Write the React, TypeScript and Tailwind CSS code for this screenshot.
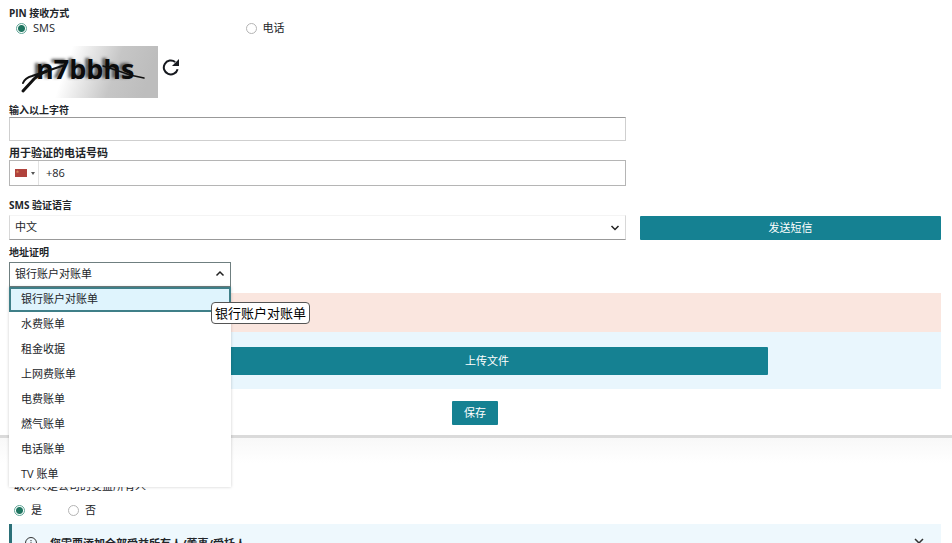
import { useState } from 'react';
import type { ReactNode } from 'react';

const PROOF_TYPES = [
  '银行账户对账单',
  '水费账单',
  '租金收据',
  '上网费账单',
  '电费账单',
  '燃气账单',
  '电话账单',
  'TV 账单',
];

type FieldLabelProps = {
  htmlFor: string;
  children: ReactNode;
};

function FieldLabel({ htmlFor, children }: FieldLabelProps) {
  return (
    <label
      htmlFor={htmlFor}
      className="block w-fit text-[10px] leading-[14px] font-bold"
    >
      {children}
    </label>
  );
}

type RadioProps = {
  name: string;
  label: string;
  checked: boolean;
  onChange: () => void;
};

function Radio({ name, label, checked, onChange }: RadioProps) {
  return (
    <label className="flex items-center gap-[6px] text-[11px] leading-4">
      <input
        type="radio"
        name={name}
        checked={checked}
        onChange={onChange}
        className="size-[11px] appearance-none rounded-full border border-[#b4b4b4] bg-white checked:border-[#5fa596] checked:bg-[radial-gradient(circle,#1f7560_0_3px,#fff_4px)]"
      />
      {label}
    </label>
  );
}

function Captcha() {
  return (
    <div className="flex items-start gap-1">
      <svg
        width="149"
        height="52"
        viewBox="0 0 149 52"
        role="img"
        aria-label="captcha"
      >
        <defs>
          <linearGradient id="captcha-bg" x1="0" y1="0" x2="1" y2="0.12">
            <stop offset="0.42" stopColor="#fff" />
            <stop offset="0.76" stopColor="#c6c6c6" />
            <stop offset="1" stopColor="#bdbdbd" />
          </linearGradient>
        </defs>
        <rect width="149" height="52" fill="url(#captcha-bg)" />
        <text
          x="27"
          y="33"
          fill="#0c0c0c"
          fontFamily='"Open Sans", "Noto Sans", sans-serif'
          fontSize="27"
          fontWeight="700"
          className="[text-shadow:-3px_-1px_3px_#555]"
        >
          n7bbhs
        </text>
        <g fill="none" stroke="#111" strokeLinecap="round">
          <path d="M14 37Q16 32 23 30L56 19" strokeWidth="2" />
          <path d="M14 45L25 33Q30 28 38 25" strokeWidth="3" />
          <path d="M94 20Q110 25 121 29L135 32" strokeWidth="1.5" />
        </g>
      </svg>
      <button type="button" aria-label="刷新" className="mt-3">
        <svg width="18" height="18" viewBox="0 0 18 18" fill="none" stroke="#16191f">
          <path d="M15.6 11.2A7 7 0 1 1 13.2 4" strokeWidth="2" />
          <path d="M17 1V8H10Z" fill="#16191f" stroke="none" />
        </svg>
      </button>
    </div>
  );
}

function Chevron({ up = false }: { up?: boolean }) {
  return (
    <svg
      width="10"
      height="10"
      viewBox="0 0 10 10"
      fill="none"
      stroke="#222"
      strokeWidth="1.5"
      className="pointer-events-none absolute top-2 right-[6px]"
    >
      <path d={up ? 'M1.5 5.5L5 2L8.5 5.5' : 'M1.5 3L5 6.5L8.5 3'} />
    </svg>
  );
}

type ProofSelectProps = {
  value: string;
  onChange: (value: string) => void;
};

function ProofSelect({ value, onChange }: ProofSelectProps) {
  return (
    <div className="relative w-[222px]">
      <select
        id="proof"
        value={value}
        onChange={(e) => onChange(e.target.value)}
        className="block h-[25px] w-full appearance-none border border-[#6f7f80] bg-white px-[5px] text-[11px]"
      >
        {PROOF_TYPES.map((type) => (
          <option key={type}>{type}</option>
        ))}
      </select>
      <Chevron up />
      <ul className="absolute top-full left-0 z-10 w-full bg-white text-[11px] shadow-[0_0_3px_rgba(0,0,0,0.2)]">
        {PROOF_TYPES.map((type) => (
          <li key={type}>
            <button
              type="button"
              onClick={() => onChange(type)}
              className={
                type === value
                  ? 'block h-[25px] w-full border-2 border-[#3f7f88] bg-[#dff4fd] px-[10px] text-left'
                  : 'block h-[25px] w-full px-3 text-left'
              }
            >
              {type}
            </button>
          </li>
        ))}
      </ul>
      <div
        role="tooltip"
        className="absolute top-10 left-[202px] z-20 rounded border border-[#555] bg-white px-[3px] text-[13px] leading-5 whitespace-nowrap text-black"
      >
        {value}
      </div>
    </div>
  );
}

function App() {
  const [pinMethod, setPinMethod] = useState('sms');
  const [proof, setProof] = useState(PROOF_TYPES[0]);
  const [isOwner, setIsOwner] = useState(true);

  return (
    <main className="h-screen overflow-hidden bg-white font-['Open_Sans','Noto_Sans_CJK_SC',sans-serif] text-[#222529]">
      <form className="border-b-3 border-[#dadada] pt-[6px] pr-[11px] pb-[10px] pl-[9px]">
        <fieldset>
          <legend className="text-[10px] leading-[14px] font-bold">PIN 接收方式</legend>
          <div className="grid grid-cols-4 pr-[7px] pl-[7px]">
            <Radio
              name="pin"
              label="SMS"
              checked={pinMethod === 'sms'}
              onChange={() => setPinMethod('sms')}
            />
            <Radio
              name="pin"
              label="电话"
              checked={pinMethod === 'phone'}
              onChange={() => setPinMethod('phone')}
            />
          </div>
        </fieldset>

        <div className="mt-[10px] mb-[5px]">
          <Captcha />
        </div>

        <div className="grid grid-cols-[617fr_301fr] items-end gap-x-[14px]">
          <div>
            <FieldLabel htmlFor="captcha">输入以上字符</FieldLabel>
            <input
              id="captcha"
              type="text"
              className="block h-6 w-full border border-[#cfcfcf] border-t-[#999] px-[5px] text-[11px]"
            />

            <label
              htmlFor="phone"
              className="mt-[5px] block w-fit text-[11px] leading-[14px] font-bold"
            >
              用于验证的电话号码
            </label>
            <div className="flex h-[26px] border border-[#b5b5b5]">
              <button
                type="button"
                aria-label="国家/地区"
                className="flex w-[29px] items-center gap-1 border-r border-[#e2e2e2] pl-[5px]"
              >
                <svg width="12" height="8" viewBox="0 0 12 8">
                  <rect width="12" height="8" fill="#b0423c" />
                  <path d="M2.5 1L3 2.3H4.2L3.2 3.1L3.6 4.3L2.5 3.6L1.4 4.3L1.8 3.1L0.8 2.3H2Z" fill="#d98a5c" />
                </svg>
                <svg width="4" height="3" viewBox="0 0 4 3">
                  <path d="M0 0H4L2 3Z" fill="#555" />
                </svg>
              </button>
              <input
                id="phone"
                type="tel"
                defaultValue="+86"
                className="min-w-0 flex-1 px-[7px] text-[11px]"
              />
            </div>

            <div className="mt-3 mb-[3px]">
              <FieldLabel htmlFor="language">SMS 验证语言</FieldLabel>
            </div>
            <div className="relative">
              <select
                id="language"
                className="block h-[25px] w-full appearance-none border border-[#d8d8d8] border-t-[#f4f4f4] border-b-[#999] bg-white px-[5px] text-[11px]"
              >
                <option>中文</option>
              </select>
              <Chevron />
            </div>
          </div>
          <button
            type="button"
            className="h-6 rounded-[1px] bg-[#158192] text-[11px] text-white"
          >
            发送短信
          </button>
        </div>

        <div className="mt-[5px] mb-[3px]">
          <FieldLabel htmlFor="proof">地址证明</FieldLabel>
        </div>
        <ProofSelect value={proof} onChange={setProof} />

        <div className="mt-[6px] h-[39px] bg-[#fae6df]" />
        <div className="flex justify-center bg-[#e9f6fd] pt-[15px] pb-[14px] pl-6">
          <button
            type="button"
            className="h-7 w-[62%] rounded-[1px] bg-[#158192] text-[11px] text-white"
          >
            上传文件
          </button>
        </div>

        <div className="mt-3 flex justify-center">
          <button
            type="submit"
            className="h-6 rounded-[1px] bg-[#158192] px-3 text-[11px] text-white"
          >
            保存
          </button>
        </div>
      </form>

      <section className="bg-linear-to-b from-[#f8f8f8] to-white to-20% pt-10 pr-[11px] pl-[9px]">
        <fieldset className="pl-[5px]">
          <legend className="text-[11px] leading-4">联系人是公司的受益所有人</legend>
          <div className="mt-2 flex gap-[26px]">
            <Radio
              name="owner"
              label="是"
              checked={isOwner}
              onChange={() => setIsOwner(true)}
            />
            <Radio
              name="owner"
              label="否"
              checked={!isOwner}
              onChange={() => setIsOwner(false)}
            />
          </div>
        </fieldset>

        <div className="mt-[6px] flex items-start gap-[13px] border-l-3 border-[#2b7078] bg-[#eef8fd] py-3 pr-[17px] pl-[13px]">
          <svg
            width="12"
            height="12"
            viewBox="0 0 12 12"
            fill="none"
            stroke="#333"
            className="mt-px"
          >
            <circle cx="6" cy="6" r="5.5" />
            <path d="M6 5.2V9M6 3V4.2" />
          </svg>
          <p className="flex-1 text-[11px] leading-4 font-bold">
            您需要添加全部受益所有人/董事/受托人
          </p>
          <button type="button" aria-label="关闭">
            <svg
              width="10"
              height="10"
              viewBox="0 0 10 10"
              fill="none"
              stroke="#333"
              strokeWidth="1.5"
              className="mt-[2px]"
            >
              <path d="M1 1L9 9M9 1L1 9" />
            </svg>
          </button>
        </div>
      </section>
    </main>
  );
}

export default App;
